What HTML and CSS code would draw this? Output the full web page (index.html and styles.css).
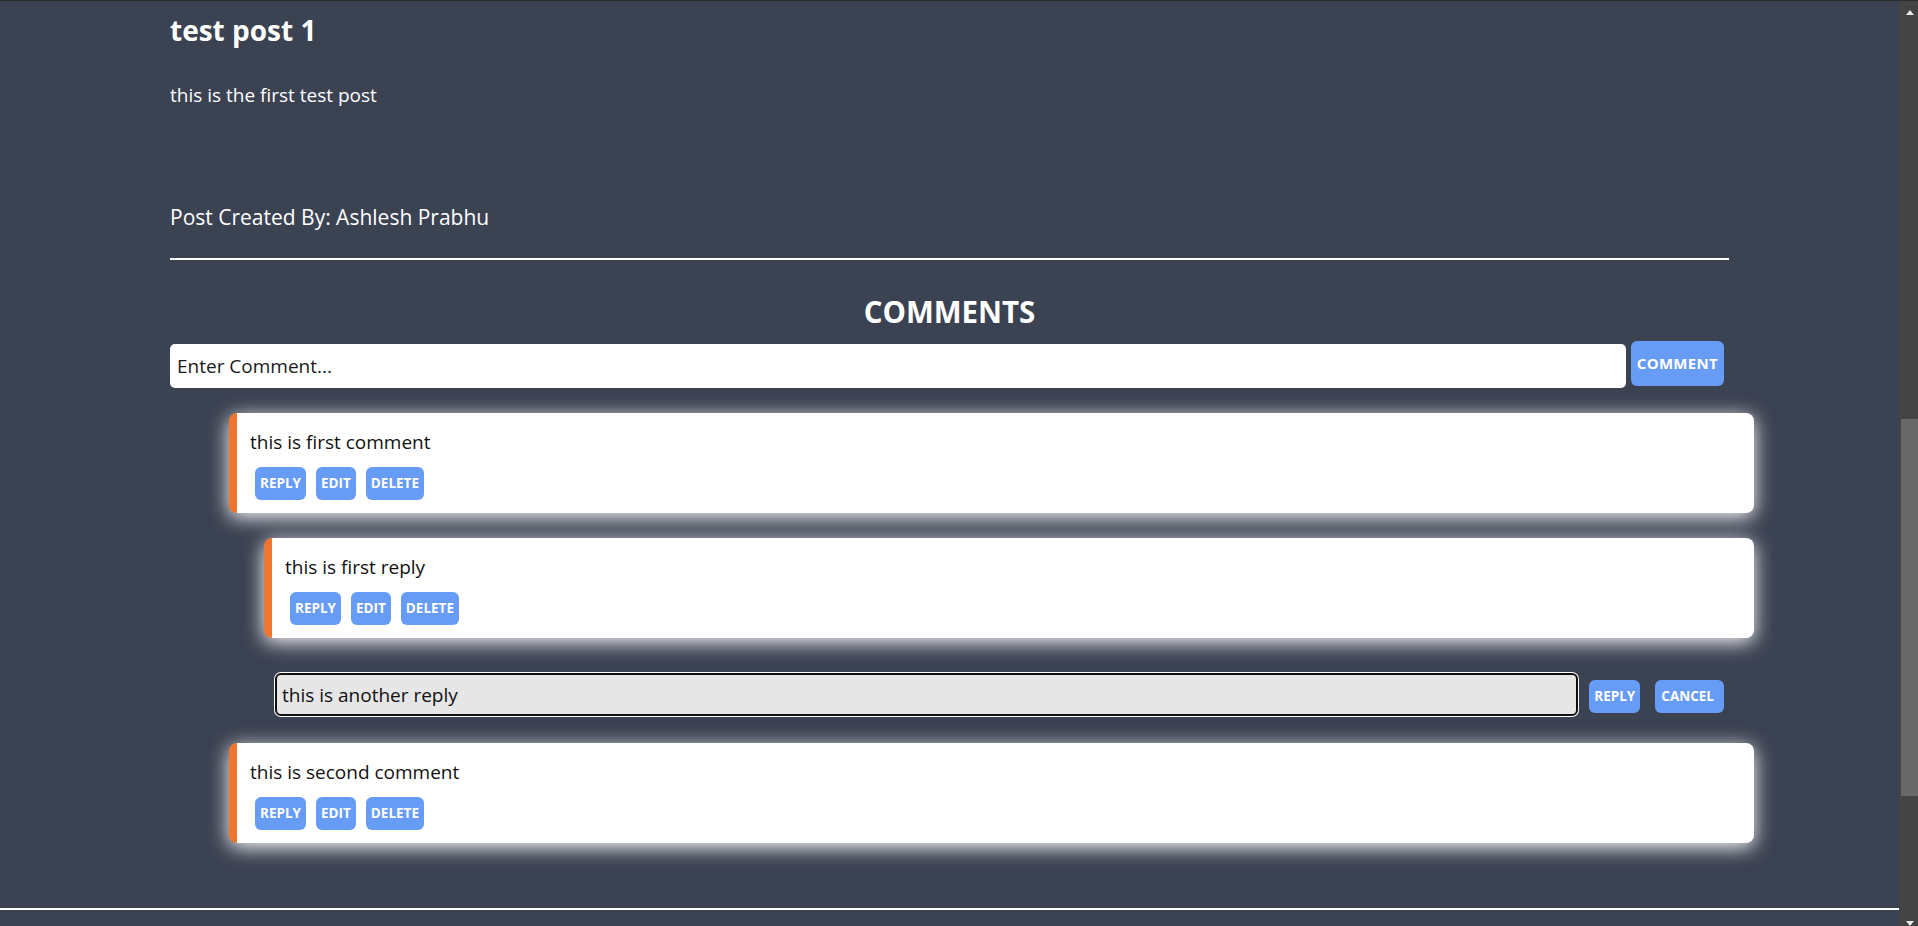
FILE: index.html
```html
<!DOCTYPE html>
<html lang="en">
<head>
<meta charset="utf-8">
<title>test post 1</title>
<link rel="stylesheet" href="styles.css">
</head>
<body>
<div class="viewport">
  <main class="page">
    <article class="post">
      <h1 class="post-title">test post 1</h1>
      <p class="post-body">this is the first test post</p>
      <p class="post-author">Post Created By: Ashlesh Prabhu</p>
    </article>
    <hr class="divider">
    <section class="comments">
      <h2 class="comments-heading">COMMENTS</h2>
      <form class="comment-form">
        <input class="comment-input" type="text" placeholder="Enter Comment...">
        <button class="btn btn-lg" type="button">COMMENT</button>
      </form>
      <div class="thread">
        <div class="comment">
          <p class="comment-text">this is first comment</p>
          <div class="actions">
            <button class="btn" type="button">REPLY</button>
            <button class="btn" type="button">EDIT</button>
            <button class="btn" type="button">DELETE</button>
          </div>
        </div>
        <div class="replies">
          <div class="comment">
            <p class="comment-text">this is first reply</p>
            <div class="actions">
              <button class="btn" type="button">REPLY</button>
              <button class="btn" type="button">EDIT</button>
              <button class="btn" type="button">DELETE</button>
            </div>
          </div>
          <div class="reply-form">
            <input class="reply-input" type="text" value="this is another reply">
            <button class="btn btn-reply" type="button">REPLY</button>
            <button class="btn btn-cancel" type="button">CANCEL</button>
          </div>
        </div>
        <div class="comment comment-next">
          <p class="comment-text">this is second comment</p>
          <div class="actions">
            <button class="btn" type="button">REPLY</button>
            <button class="btn" type="button">EDIT</button>
            <button class="btn" type="button">DELETE</button>
          </div>
        </div>
      </div>
    </section>
  </main>
  <footer class="footer-line"></footer>
</div>
<div class="scrollbar" aria-hidden="true">
  <span class="arrow-up"></span>
  <span class="thumb"></span>
  <span class="arrow-down"></span>
</div>
</body>
</html>
```

FILE: styles.css
```css
* {
  box-sizing: border-box;
}

html, body {
  margin: 0;
  padding: 0;
}

body {
  height: 926px;
  overflow: hidden;
  display: flex;
  background: #3b4252;
  border-top: 1px solid #2b2b2b;
  font-family: "Open Sans", "Noto Sans", sans-serif;
  color: #fff;
}

.viewport {
  flex: 1;
  min-width: 0;
  display: flex;
  flex-direction: column;
}

.page {
  width: 1559px;
  margin: 0 auto;
  padding-top: 11px;
}

.post-title {
  margin: 0;
  font-size: 28px;
  line-height: 36px;
  font-weight: 700;
}

.post-body {
  margin: 34px 0 0;
  font-size: 19px;
  line-height: 26px;
}

.post-author {
  margin: 95px 0 0;
  font-size: 21px;
  line-height: 28px;
}

.divider {
  margin: 27px 0 0;
  height: 0;
  border: 0;
  border-top: 2px solid #fff;
}

.comments-heading {
  margin: 34px 0 0;
  text-align: center;
  font-size: 29.5px;
  line-height: 36px;
  font-weight: 700;
}

.comment-form {
  display: flex;
  align-items: flex-start;
  gap: 5px;
  margin: 11px 0 0;
  padding-right: 5px;
}

.comment-input {
  flex: 1;
  height: 44px;
  margin-top: 3px;
  padding: 0 7px;
  border: 0;
  border-radius: 5px;
  background: #fff;
  font-family: "Open Sans", "Noto Sans", sans-serif;
  font-size: 19px;
  color: #111;
  outline: none;
}

.comment-input::placeholder {
  color: #1a1a1a;
  opacity: 1;
}

.btn {
  height: 33px;
  padding: 0 5px;
  border: 0;
  border-radius: 6px;
  background: #679cf6;
  color: #fff;
  font-family: "Open Sans", "Noto Sans", sans-serif;
  font-size: 13.5px;
  font-weight: 700;
  line-height: 1;
  cursor: pointer;
}

.btn-lg {
  height: 45px;
  padding: 0 6px;
  font-size: 15px;
  letter-spacing: 0.3px;
}

.thread {
  margin: 25px -25px 65px 59px;
}

.comment {
  background: #fff;
  border-left: 8px solid #ef7630;
  border-radius: 8px;
  padding: 16px 13px 13px;
  box-shadow: 0 4px 20px #fff;
}

.comment-text {
  margin: 0;
  font-size: 19px;
  line-height: 26px;
  color: #111;
}

.actions {
  display: flex;
  gap: 10px;
  margin: 12px 0 0 5px;
}

.replies {
  margin: 25px 0 0 35px;
}

.reply-form {
  display: flex;
  align-items: flex-start;
  margin: 35px 30px 0 11px;
}

.reply-input {
  flex: 1;
  height: 43px;
  padding: 0 5px;
  border: 2px solid #111;
  border-radius: 6px;
  box-shadow: 0 0 0 1px #fff;
  background: #e6e6e6;
  font-family: "Open Sans", "Noto Sans", sans-serif;
  font-size: 19px;
  color: #111;
  outline: none;
}

.btn-reply {
  margin: 7px 0 0 11px;
}

.btn-cancel {
  margin: 7px 0 0 15px;
  padding: 0 10px 0 6px;
}

.comment-next {
  margin-top: 27px;
}

.footer-line {
  flex: 1;
  border-top: 2px solid #fff;
}

.scrollbar {
  width: 19px;
  flex-shrink: 0;
  background: #444444;
  display: flex;
  flex-direction: column;
  align-items: center;
}

.arrow-up {
  margin: 9px 0 0 2px;
  width: 0;
  height: 0;
  border-left: 4.5px solid transparent;
  border-right: 4.5px solid transparent;
  border-bottom: 5px solid #e8e8e8;
}

.thumb {
  align-self: flex-end;
  width: 17px;
  height: 378px;
  margin-top: 404px;
  background: #686868;
}

.arrow-down {
  margin: 125px 0 0 2px;
  width: 0;
  height: 0;
  border-left: 4.5px solid transparent;
  border-right: 4.5px solid transparent;
  border-top: 5px solid #e8e8e8;
}
```
